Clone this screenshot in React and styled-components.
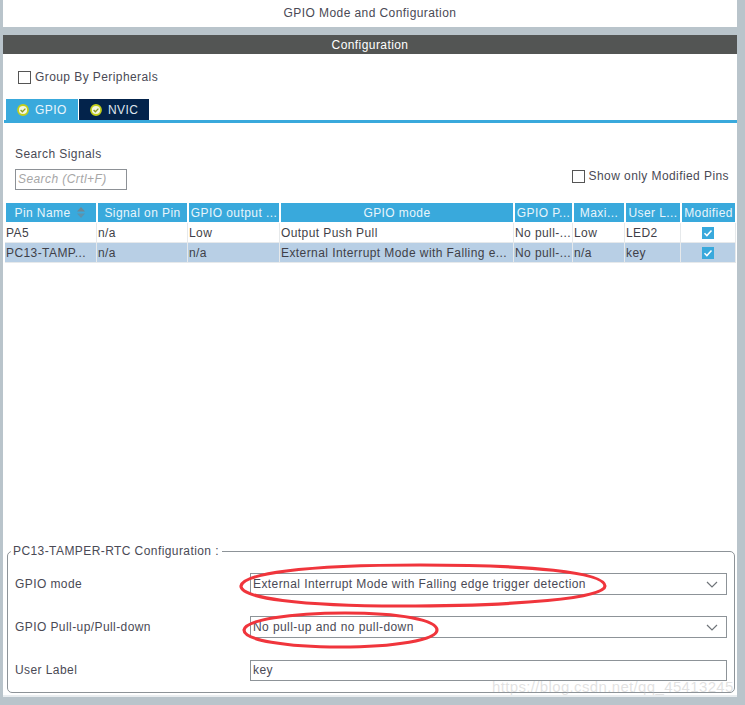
import { Fragment } from "react";
import styled, { createGlobalStyle } from "styled-components";

const GlobalStyle = createGlobalStyle`
  html, body {
    margin: 0;
    padding: 0;
    background: #b9c4cb;
  }
  * {
    box-sizing: border-box;
  }
`;

const Page = styled.div`
  position: relative;
  width: 745px;
  height: 705px;
  padding: 0 8px 8px 3px;
  display: flex;
  flex-direction: column;
  overflow: hidden;
  background: #b9c4cb;
  color: #4a4a55;
  font-family: "Liberation Sans", Arial, sans-serif;
  font-size: 12px;
  letter-spacing: 0.42px;
`;

const TitleBar = styled.div`
  height: 27px;
  margin-bottom: 8px;
  padding-bottom: 2px;
  background: #fff;
  display: flex;
  align-items: center;
  justify-content: center;
`;

const ConfigBar = styled.div`
  height: 19px;
  background: #535554;
  color: #fff;
  display: flex;
  align-items: center;
  justify-content: center;
`;

const Body = styled.div`
  flex: 1;
  display: flex;
  flex-direction: column;
  background: #fff;
  border-bottom: 2px solid #e9edf0;
`;

const CheckRow = styled.label`
  display: flex;
  align-items: center;
  gap: 4px;
  height: 14px;
`;

const Box = styled.span`
  width: 13px;
  height: 13px;
  border: 1px solid #555;
  background: #fff;
`;

const GroupRow = styled.div`
  padding: 16px 0 0 15px;
`;

const Tabs = styled.div`
  margin: 15px 0 0 1px;
  height: 24px;
  display: flex;
  align-items: flex-start;
  border-bottom: 3px solid #39a9dc;
`;

const Tab = styled.div`
  margin-left: ${(p) => p.$first ? "2px" : "1px"};
  width: ${(p) => p.$first ? "72px" : "70px"};
  height: 21px;
  padding-left: 11px;
  display: flex;
  align-items: center;
  gap: 6px;
  color: ${(p) => p.$active ? "#e8f5fb" : "#dfe6ee"};
  background: ${(p) => p.$active ? "#39a9dc" : "#03234b"};
`;

const SearchRow = styled.div`
  margin-top: 24px;
  padding: 0 7px 0 12px;
  height: 43px;
  display: flex;
  justify-content: space-between;
  align-items: flex-start;
`;

const SearchBlock = styled.div`
  display: flex;
  flex-direction: column;
  gap: 8px;
`;

const SearchCaption = styled.div`
  height: 14px;
  line-height: 14px;
`;

const SearchInput = styled.div`
  width: 112px;
  height: 21px;
  padding-left: 2px;
  border: 1px solid #8d9196;
  color: #a6a6a6;
  font-style: italic;
  line-height: 19px;
`;

const ModifiedToggle = styled.div`
  padding-top: 22px;
  padding-right: 1px;
`;

const Table = styled.div`
  margin-top: 13px;
  margin-left: 2px;
  width: 731px;
  display: grid;
  grid-template-columns: 92px 91px 92px 234px 59px 52px 56px 55px;
  grid-auto-rows: 20px;
`;

const HeadCell = styled.div`
  height: 19px;
  margin: 0 1px 0 1px;
  display: flex;
  align-items: center;
  justify-content: center;
  gap: 6px;
  padding-right: ${(p) => p.$sorted ? "3px" : "0"};
  background: #39a9dc;
  color: #e8f5fb;
  white-space: nowrap;
  overflow: hidden;
`;

const Cell = styled.div`
  height: 20px;
  padding-left: ${(p) => p.$center ? "0" : "1px"};
  padding-right: ${(p) => p.$center ? "1px" : "0"};
  display: flex;
  align-items: center;
  justify-content: ${(p) => p.$center ? "center" : "flex-start"};
  background: ${(p) => p.$selected ? "#b8cfe5" : "#fff"};
  border-right: 1px solid #e6e9eb;
  border-bottom: 1px solid #e6e9eb;
  color: #3f3f48;
  white-space: nowrap;
  overflow: hidden;
`;

const Fieldset = styled.fieldset`
  position: relative;
  margin: auto 4px 2px 4px;
  padding: 0 7px 0 7px;
  height: 149px;
  border: 1px solid #8d9398;
  border-radius: 5px;
`;

const Legend = styled.legend`
  margin-left: -4px;
  padding: 0 3px 0 2px;
  line-height: 14px;
`;

const FormGrid = styled.div`
  margin-top: 15px;
  display: grid;
  grid-template-columns: 235px 477px;
  grid-auto-rows: 22px;
  row-gap: 21px;
  align-items: center;
`;

const Field = styled.div`
  height: ${(p) => p.$text ? "21px" : "22px"};
  padding: 0 8px 0 2px;
  display: flex;
  align-items: center;
  justify-content: space-between;
  border: 1px solid #8d9398;
  background: #fff;
`;

const Ellipses = styled.svg`
  position: absolute;
  left: 0;
  top: 0;
  pointer-events: none;
`;

const Watermark = styled.div`
  position: absolute;
  left: 492px;
  top: 678px;
  color: rgba(190, 190, 190, 0.45);
  font-size: 15px;
  letter-spacing: 0.35px;
  white-space: nowrap;
`;

const TabCheck = () => (
  <svg width="12" height="12" viewBox="0 0 12 12">
    <circle cx="6" cy="6" r="5" fill="#f4f7e0" stroke="#c4cf1a" strokeWidth="1.8" />
    <path d="M3.6 6l1.8 1.8 3-3.2" fill="none" stroke="#8e9a20" strokeWidth="1.3" />
  </svg>
);

const SortIcon = () => (
  <svg width="8" height="11" viewBox="0 0 8 11">
    <path d="M4 0l4 4.5H0z" fill="#6f8794" />
    <path d="M4 11l4-4.5H0z" fill="#5d93ad" />
  </svg>
);

const CheckedBox = () => (
  <svg width="12" height="12" viewBox="0 0 12 12">
    <rect width="12" height="12" fill="#39a9dc" />
    <path d="M2.5 6.2l2.4 2.4 4.6-5" fill="none" stroke="#fff" strokeWidth="1.5" />
  </svg>
);

const Chevron = () => (
  <svg width="12" height="7" viewBox="0 0 12 7">
    <path d="M1 1l5 5 5-5" fill="none" stroke="#6f7479" strokeWidth="1.2" />
  </svg>
);

const headers = ["Signal on Pin", "GPIO output ...", "GPIO mode", "GPIO P...", "Maxi...", "User L...", "Modified"];

const rows = [
  { cells: ["PA5", "n/a", "Low", "Output Push Pull", "No pull-...", "Low", "LED2"] },
  { cells: ["PC13-TAMP...", "n/a", "n/a", "External Interrupt Mode with Falling e...", "No pull-...", "n/a", "key"], selected: true },
];

export default function App() {
  return (
    <Page>
      <GlobalStyle />
      <TitleBar>GPIO Mode and Configuration</TitleBar>
      <ConfigBar>Configuration</ConfigBar>
      <Body>
        <GroupRow>
          <CheckRow><Box />Group By Peripherals</CheckRow>
        </GroupRow>
        <Tabs>
          <Tab $first $active><TabCheck />GPIO</Tab>
          <Tab><TabCheck />NVIC</Tab>
        </Tabs>
        <SearchRow>
          <SearchBlock>
            <SearchCaption>Search Signals</SearchCaption>
            <SearchInput>Search (Crtl+F)</SearchInput>
          </SearchBlock>
          <ModifiedToggle>
            <CheckRow><Box />Show only Modified Pins</CheckRow>
          </ModifiedToggle>
        </SearchRow>
        <Table>
          <HeadCell $sorted>Pin Name <SortIcon /></HeadCell>
          {headers.map((h) => <HeadCell key={h}>{h}</HeadCell>)}
          {rows.map((row) => (
            <Fragment key={row.cells[0]}>
              {row.cells.map((c, i) => (
                <Cell key={i} $selected={row.selected}>{c}</Cell>
              ))}
              <Cell $center $selected={row.selected}><CheckedBox /></Cell>
            </Fragment>
          ))}
        </Table>
        <Fieldset>
          <Legend>PC13-TAMPER-RTC Configuration :</Legend>
          <FormGrid>
            <span>GPIO mode</span>
            <Field>External Interrupt Mode with Falling edge trigger detection<Chevron /></Field>
            <span>GPIO Pull-up/Pull-down</span>
            <Field>No pull-up and no pull-down<Chevron /></Field>
            <span>User Label</span>
            <Field $text>key</Field>
          </FormGrid>
        </Fieldset>
      </Body>
      <Ellipses width="745" height="705" viewBox="0 0 745 705">
        <path d="M241 586C243 574 300 565 420 565C530 565 604 572 605 586C605 598 520 606 400 606C300 606 240 598 241 586Z" fill="none" stroke="#f0353c" strokeWidth="3.2" />
        <path d="M244 630C245 620 290 613 345 613C400 613 437 620 437 630C437 640 395 647 340 647C285 647 244 640 244 630Z" fill="none" stroke="#f0353c" strokeWidth="3.2" />
      </Ellipses>
      <Watermark>https://blog.csdn.net/qq_45413245</Watermark>
    </Page>
  );
}
